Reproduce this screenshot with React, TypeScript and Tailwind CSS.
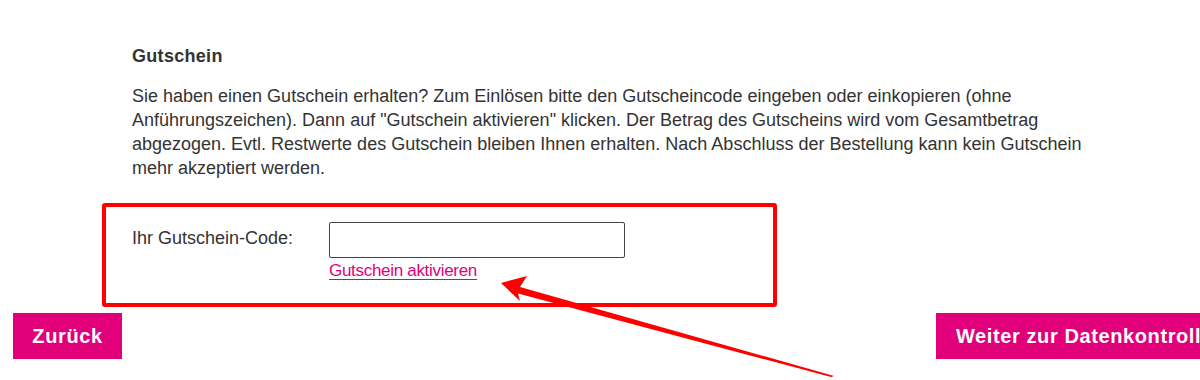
export default function App() {
  return (
    <div className="relative w-[1200px] h-[380px] overflow-hidden bg-white text-[#333] font-['Liberation_Sans',Arial,sans-serif]">
      <div className="pt-[44px] pl-[132px]">
        <h3 className="text-[18px] leading-6 font-bold tracking-[0.3px]">Gutschein</h3>
        <p className="mt-4 w-[970px] text-[18px] leading-6">
          Sie haben einen Gutschein erhalten? Zum Einlösen bitte den Gutscheincode eingeben oder einkopieren (ohne
          Anführungszeichen). Dann auf "Gutschein aktivieren" klicken. Der Betrag des Gutscheins wird vom Gesamtbetrag
          abgezogen. Evtl. Restwerte des Gutschein bleiben Ihnen erhalten. Nach Abschluss der Bestellung kann kein
          Gutschein mehr akzeptiert werden.
        </p>
        <div className="mt-[42px] flex items-start">
          <label className="w-[197px] text-[18px] leading-[32px]">Ihr Gutschein-Code:</label>
          <div className="flex flex-col items-start">
            <input
              type="text"
              className="w-[296px] h-[36px] border border-[#444] rounded-[2px] bg-white px-2 outline-none"
            />
            <a
              href="#"
              className="mt-[3px] text-[17px] leading-5 tracking-[-0.3px] text-[#e0007a] underline underline-offset-[3px]"
            >
              Gutschein aktivieren
            </a>
          </div>
        </div>
      </div>

      <div className="mt-[32px] flex items-center pl-[13px]">
        <button className="w-[109px] h-[46px] shrink-0 bg-[#e2007a] text-white text-[20px] font-bold tracking-[0.6px]">
          Zurück
        </button>
        <button className="ml-[814px] h-[46px] shrink-0 whitespace-nowrap bg-[#e2007a] text-white text-[20px] font-bold tracking-[0.6px] pl-5 pr-5 text-left">
          Weiter zur Datenkontrolle
        </button>
      </div>

      {/* annotation box */}
      <div className="absolute left-[102px] top-[203px] w-[675px] h-[104px] border-4 border-[#ff0000] rounded-[3px] pointer-events-none" />

      {/* annotation arrow */}
      <svg className="absolute left-0 top-0 pointer-events-none" width="1200" height="380" viewBox="0 0 1200 380">
        <polygon
          points="501,283 527,276 520,287 834,376 831,377 518,293.5 520,301"
          fill="#ff0000"
        />
      </svg>
    </div>
  );
}
